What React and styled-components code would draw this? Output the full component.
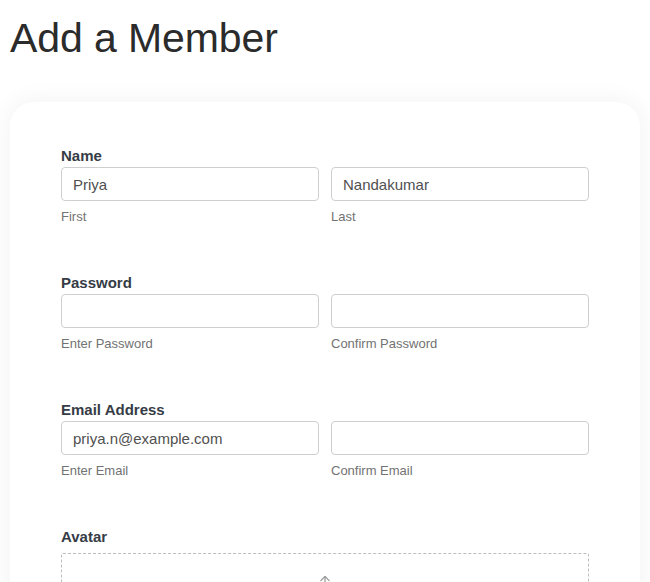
import React from "react";
import styled, { createGlobalStyle } from "styled-components";

const Global = createGlobalStyle`
  html, body { margin: 0; padding: 0; background: #ffffff; }
  body { font-family: "Liberation Sans", Arial, sans-serif; overflow: hidden; }
`;

const Page = styled.div`
  padding: 14px 10px 0 10px;
`;

const Title = styled.h1`
  margin: 0 0 40px 0;
  font-size: 41px;
  line-height: 48px;
  font-weight: 400;
  color: #2b2b2b;
  letter-spacing: -0.1px;
`;

const Card = styled.div`
  background: #ffffff;
  border-radius: 24px;
  box-shadow: 0 0 22px 4px rgba(0, 0, 0, 0.045);
  padding: 45px 51px 40px 51px;
  min-height: 600px;
`;

const Section = styled.div`
  margin-bottom: ${(p) => p.$gap ?? 49}px;
`;

const Label = styled.div`
  font-size: 15px;
  line-height: 18px;
  font-weight: 700;
  color: #363c46;
  margin-bottom: ${(p) => p.$space ?? 2}px;
`;

const Row = styled.div`
  display: grid;
  grid-template-columns: 1fr 1fr;
  column-gap: 12px;
`;

const Field = styled.div`
  display: flex;
  flex-direction: column;
`;

const Input = styled.input`
  box-sizing: border-box;
  height: 34px;
  width: 100%;
  border: 1px solid #cfcfcf;
  border-radius: 4px;
  padding: 0 11px;
  font-family: "Liberation Sans", Arial, sans-serif;
  font-size: 15px;
  color: #505050;
  background: #fff;
  outline: none;
`;

const Caption = styled.div`
  margin-top: 8px;
  font-size: 13px;
  line-height: 16px;
  color: #727272;
`;

const Drop = styled.div`
  box-sizing: border-box;
  height: 120px;
  border: 1px dashed #bdbdbd;
  border-radius: 2px;
  display: flex;
  justify-content: center;
  padding-top: 20px;
`;

const sections = [
  { label: "Name", fields: [{ value: "Priya", cap: "First" }, { value: "Nandakumar", cap: "Last" }] },
  { label: "Password", fields: [{ value: "", cap: "Enter Password", type: "password" }, { value: "", cap: "Confirm Password", type: "password" }] },
  { label: "Email Address", fields: [{ value: "priya.n@example.com", cap: "Enter Email" }, { value: "", cap: "Confirm Email" }] },
];

export default function App() {
  return (
    <>
      <Global />
      <Page>
        <Title>Add a Member</Title>
        <Card>
          {sections.map((s) => (
            <Section key={s.label}>
              <Label>{s.label}</Label>
              <Row>
                {s.fields.map((f) => (
                  <Field key={f.cap}>
                    <Input type={f.type || "text"} defaultValue={f.value} />
                    <Caption>{f.cap}</Caption>
                  </Field>
                ))}
              </Row>
            </Section>
          ))}
          <Section $gap={0}>
            <Label $space={7}>Avatar</Label>
            <Drop>
              <svg width="20" height="20" viewBox="0 0 24 24" fill="none" stroke="#9a9a9a" strokeWidth="1.5" strokeLinecap="round" strokeLinejoin="round">
                <path d="M12 3v13" />
                <path d="M7 8l5-5 5 5" />
              </svg>
            </Drop>
          </Section>
        </Card>
      </Page>
    </>
  );
}
